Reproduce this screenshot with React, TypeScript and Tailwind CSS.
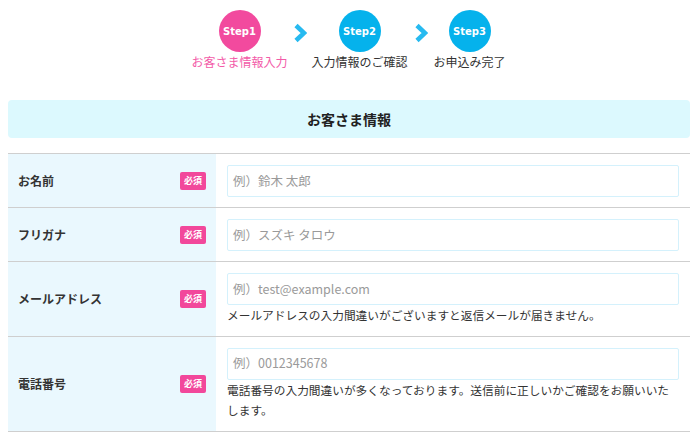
import React from "react";

const jp = { fontFamily: '"Noto Sans CJK JP", "Noto Sans", sans-serif' };

function Chevron({ w }: { w: string }) {
  return (
    <div className={`${w} flex justify-center items-center h-[42px] mt-[12px]`}>
      <svg width="14" height="20" viewBox="0 0 14 20">
        <polyline
          points="3,2.5 11,10 3,17.5"
          fill="none"
          stroke="#27baf0"
          strokeWidth="4.6"
          strokeLinecap="butt"
          strokeLinejoin="miter"
        />
      </svg>
    </div>
  );
}

function Step({ n, label, active, w }: { n: number; label: string; active?: boolean; w: string }) {
  return (
    <div className={`${w} flex flex-col items-center pt-[10px]`}>
      <div
        className={`w-[42px] h-[42px] rounded-full flex items-center justify-center text-white font-bold text-[10px] ${
          active ? "bg-[#f24a9e]" : "bg-[#05b2ec]"
        }`}
        style={{ fontFamily: '"DejaVu Sans", sans-serif' }}
      >
        Step{n}
      </div>
      <div
        className={`mt-[2px] text-[12px] leading-[16px] whitespace-nowrap ${
          active ? "text-[#f35ba8]" : "text-[#333333]"
        }`}
      >
        {label}
      </div>
    </div>
  );
}

function Badge() {
  return (
    <span className="w-[26px] h-[18px] rounded-[2px] bg-[#f2489b] text-white text-[9px] font-bold flex items-center justify-center leading-none">
      必須
    </span>
  );
}

function Row({
  label,
  placeholder,
  hint,
}: {
  label: string;
  placeholder: string;
  hint?: string;
}) {
  return (
    <div className="flex border-t border-[#cfcfcf]">
      <div className="w-[208px] bg-[#eaf8fe] flex items-center justify-between pl-[10px] pr-[10px]">
        <span className="text-[12px] font-bold text-[#333333]">{label}</span>
        <Badge />
      </div>
      <div className="flex-1 pt-[11px] pb-[10px] pl-[11px] pr-[11px]">
        <div className="h-[32px] border border-[#d4f1fc] rounded-[2px] flex items-center pl-[5px] text-[12.5px] text-[#9a9a9a]">
          {placeholder}
        </div>
        {hint && (
          <div className="text-[11.7px] leading-[20.5px] text-[#333333]">{hint}</div>
        )}
      </div>
    </div>
  );
}

export default function App() {
  return (
    <div className="w-[700px] h-[437px] bg-white overflow-hidden" style={jp}>
      <div className="flex justify-center items-start pr-[3px]">
        <Step n={1} label="お客さま情報入力" active w="w-[96px]" />
        <Chevron w="w-[24px]" />
        <Step n={2} label="入力情報のご確認" w="w-[96px]" />
        <Chevron w="w-[26px]" />
        <Step n={3} label="お申込み完了" w="w-[72px]" />
      </div>
      <div className="pl-[8px] pr-[10px] mt-[30px]">
        <div className="h-[38px] rounded-[4px] bg-[#dcf9fe] flex items-center justify-center text-[14px] font-bold text-[#222222]">
          お客さま情報
        </div>
        <div className="mt-[15px] border-b border-[#cfcfcf]">
          <Row label="お名前" placeholder="例）鈴木 太郎" />
          <Row label="フリガナ" placeholder="例）スズキ タロウ" />
          <Row
            label="メールアドレス"
            placeholder="例）test@example.com"
            hint="メールアドレスの入力間違いがございますと返信メールが届きません。"
          />
          <Row
            label="電話番号"
            placeholder="例）0012345678"
            hint="電話番号の入力間違いが多くなっております。送信前に正しいかご確認をお願いいたします。"
          />
        </div>
      </div>
    </div>
  );
}
